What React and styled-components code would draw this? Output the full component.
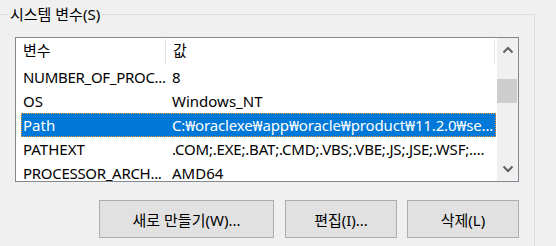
import React from "react";
import styled, { createGlobalStyle } from "styled-components";

const GlobalStyle = createGlobalStyle`
  html, body {
    margin: 0;
    padding: 0;
    background: #f0f0f0;
  }
  body {
    font-family: "Noto Sans", "Noto Sans CJK KR", sans-serif;
    font-size: 15px;
    color: #000;
  }
`;

const Page = styled.div`
  width: 556px;
  height: 246px;
  overflow: hidden;
  background: #f0f0f0;
  padding-top: 14px;
  box-sizing: border-box;
`;

const Group = styled.div`
  margin-left: -10px;
  width: 545px;
  height: 260px;
  box-sizing: border-box;
  border: 1px solid #dcdcdc;
  display: flex;
  flex-direction: column;
  padding-left: 24px;
`;

const Title = styled.div`
  align-self: flex-start;
  margin: -12px 0 0 -7px;
  padding: 0 2px;
  background: #f0f0f0;
  line-height: 22px;
  height: 22px;
`;

const List = styled.div`
  margin-top: 12px;
  width: 504px;
  height: 145px;
  box-sizing: border-box;
  border: 1px solid #828790;
  background: #fff;
  display: flex;
  overflow: hidden;
`;

const Body = styled.div`
  flex: 1;
  display: flex;
  flex-direction: column;
`;

const Header = styled.div`
  display: flex;
  height: 27px;
  flex-shrink: 0;
  padding-left: 5px;
`;

const HeadCell = styled.div`
  width: ${(p) => p.$w}px;
  box-sizing: border-box;
  padding-left: ${(p) => p.$pad}px;
  border-right: 1px solid #e5e5e5;
  margin: 1px 0 0;
  line-height: 22px;
  height: 25px;
`;

const Row = styled.div`
  display: flex;
  height: 24px;
  flex-shrink: 0;
  margin-left: 5px;
  width: 475px;
  box-sizing: border-box;
  line-height: 22px;
  background: ${(p) => (p.$selected ? "#0078d7" : "transparent")};
  color: ${(p) => (p.$selected ? "#fff" : "#000")};
  border: 1px dotted ${(p) => (p.$selected ? "#f39b32" : "transparent")};
`;

const Cell = styled.div`
  width: ${(p) => p.$w}px;
  flex-shrink: 0;
  box-sizing: border-box;
  padding-left: ${(p) => p.$pad}px;
  white-space: nowrap;
  overflow: hidden;
  letter-spacing: ${(p) => p.$ls || 0}px;
`;

const ScrollBar = styled.div`
  width: 21px;
  flex-shrink: 0;
  background: #f0f0f0;
  display: flex;
  flex-direction: column;
`;

const Arrow = styled.div`
  height: 24px;
  display: flex;
  align-items: center;
  justify-content: center;
  color: #606060;
`;

const Thumb = styled.div`
  margin: 17px 1px 0 0;
  height: 24px;
  background: #cdcdcd;
`;

const Spacer = styled.div`
  flex: 1;
`;

const Buttons = styled.div`
  width: 504px;
  margin-top: 18px;
  display: flex;
  justify-content: flex-end;
  gap: 10px;
`;

const Button = styled.button`
  width: ${(p) => p.$w}px;
  height: 38px;
  box-sizing: border-box;
  background: #e1e1e1;
  border: 1px solid #adadad;
  font: inherit;
  color: #000;
  padding: 0;
  margin-left: ${(p) => p.$ml || 0}px;
`;

const Chevron = ({ up }) => (
  <svg width="12" height="8" viewBox="0 0 12 8">
    <path
      d={up ? "M1.5 6.5 L6 2 L10.5 6.5" : "M1.5 1.5 L6 6 L10.5 1.5"}
      fill="none"
      stroke="currentColor"
      strokeWidth="2"
    />
  </svg>
);

const rows = [
  { name: "NUMBER_OF_PROC...", nls: -0.3, value: "8" },
  { name: "OS", value: "Windows_NT" },
  { name: "Path", value: "C:₩oraclexe₩app₩oracle₩product₩11.2.0₩se...", selected: true, ls: -0.15 },
  { name: "PATHEXT", value: ".COM;.EXE;.BAT;.CMD;.VBS;.VBE;.JS;.JSE;.WSF;....", ls: -0.2 },
  { name: "PROCESSOR_ARCH...", nls: -0.3, value: "AMD64" },
];

export default function App() {
  return (
    <>
      <GlobalStyle />
      <Page>
        <Group>
          <Title>시스템 변수(S)</Title>
          <List>
            <Body>
              <Header>
                <HeadCell $w={145} $pad={2}>변수</HeadCell>
                <HeadCell $w={329} $pad={7}>값</HeadCell>
              </Header>
              {rows.map((r) => (
                <Row key={r.name} $selected={r.selected}>
                  <Cell $w={144} $pad={1} $ls={r.nls}>{r.name}</Cell>
                  <Cell $w={329} $pad={6} $ls={r.ls}>{r.value}</Cell>
                </Row>
              ))}
            </Body>
            <ScrollBar>
              <Arrow><Chevron up /></Arrow>
              <Thumb />
              <Spacer />
              <Arrow><Chevron /></Arrow>
            </ScrollBar>
          </List>
          <Buttons>
            <Button $w={175}>새로 만들기(W)...</Button>
            <Button $w={112} $ml={1}>편집(I)...</Button>
            <Button $w={112}>삭제(L)</Button>
          </Buttons>
        </Group>
      </Page>
    </>
  );
}
